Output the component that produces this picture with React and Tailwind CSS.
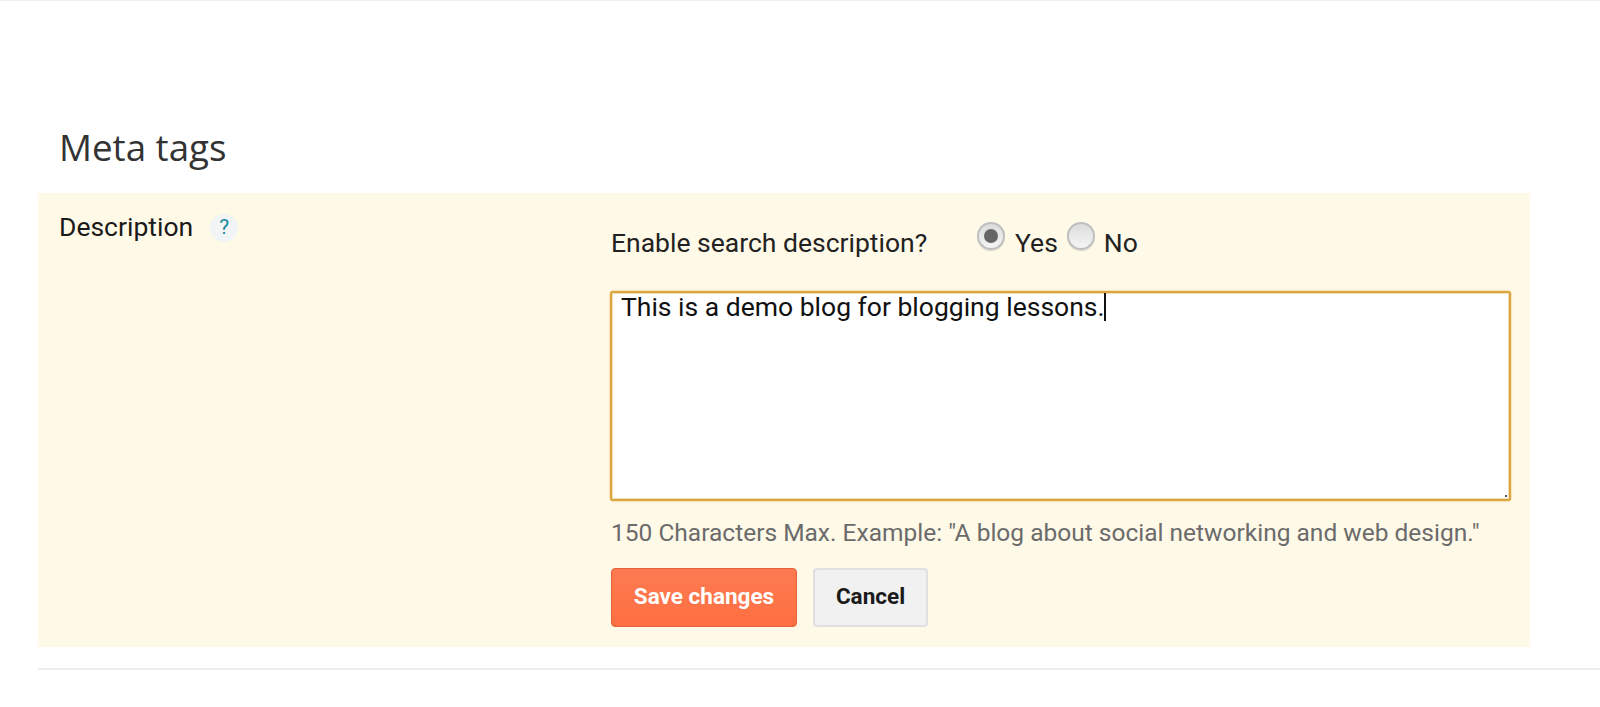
export default function App() {
  const radio = "mt-[-2px] w-[28px] h-[28px] rounded-full bg-gradient-to-b from-[#dcdcdc] to-[#f5f5f5] border-2 border-[#bfbfbf] shadow-[0_1px_1px_rgba(0,0,0,0.15)] flex items-center justify-center";

  return (
    <div className="h-[707px] overflow-hidden bg-white font-['Roboto',sans-serif] border-t border-[#f0f0f0]">
      <div className="pl-[38px] pr-[70px]">
        <h2 className="pt-[121px] pl-[21px] h-[192px] text-[36.7px] leading-[50px] text-[#333] font-['Open_Sans',sans-serif]">
          Meta tags
        </h2>
        <div className="h-[454px] bg-[#fff9e8] flex">
          <div className="w-[573px] shrink-0 pl-[21px] pt-[18px] flex items-start">
            <span className="text-[26.5px] leading-[32px] text-[#1a1a1a]">Description</span>
            <span className="ml-[17px] mt-[3px] w-[28px] h-[28px] rounded-full bg-[#f1f5f5] flex items-center justify-center text-[21px] text-[#1a8a9e]">
              ?
            </span>
          </div>
          <div className="flex-1 pr-[19px]">
            <div className="h-[98px] pt-[31px] flex items-start text-[26.5px] leading-[38px] text-[#222]">
              <span className="w-[366px]">Enable search description?</span>
              <span className={radio}>
                <span className="w-[14px] h-[14px] rounded-full bg-[#666]"></span>
              </span>
              <span className="ml-[10px]">Yes</span>
              <span className={`ml-[9px] ${radio}`}></span>
              <span className="ml-[9px]">No</span>
            </div>
            <div className="ml-[-1px] h-[210px] bg-white border-2 border-[#d9a63f] shadow-[0_0_2px_#e8b04e,inset_0_0_0_1px_#f3ddb0] rounded-[3px] px-[9px] relative">
              <span className="text-[26.5px] leading-[28px] text-[#111] border-r-2 border-[#111] inline-block">
                This is a demo blog for blogging lessons.
              </span>
              <span className="absolute right-[2px] bottom-[2px] w-[2px] h-[2px] bg-[#555]"></span>
            </div>
            <p className="mt-[15px] text-[24.5px] leading-[34px] text-[#6b6b6b] whitespace-nowrap">
              150 Characters Max. Example: "A blog about social networking and web design."
            </p>
            <div className="mt-[18px] flex gap-[16px]">
              <button className="w-[186px] h-[59px] pb-[2px] bg-gradient-to-b from-[#fc7a51] to-[#ff6f42] border border-[#e2623a] rounded-[4px] text-white text-[22.5px] font-bold">
                Save changes
              </button>
              <button className="w-[115px] h-[59px] pb-[2px] bg-[#f1f1f1] border-2 border-[#e0e0e0] rounded-[4px] text-[#1a1a1a] text-[22.5px] font-bold">
                Cancel
              </button>
            </div>
          </div>
        </div>
      </div>
      <div className="ml-[38px] mt-[21px] h-[2px] bg-[#eeeeee]"></div>
    </div>
  );
}
